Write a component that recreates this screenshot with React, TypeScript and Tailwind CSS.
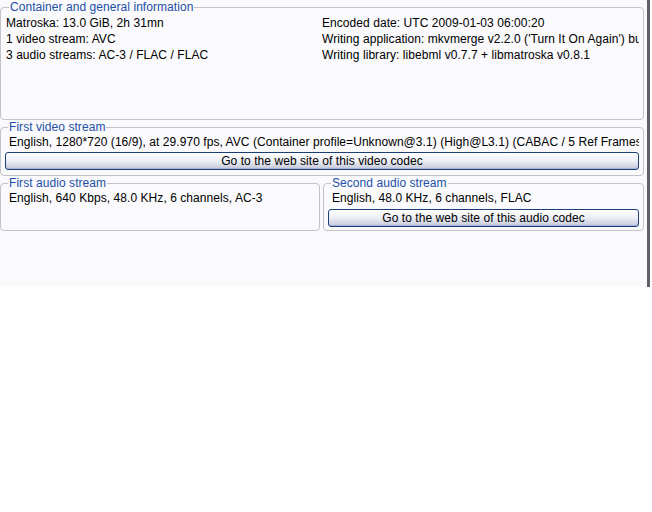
const font = { fontFamily: '"Liberation Sans", Arial, sans-serif' };

const GroupBox = ({
    title,
    className,
    children,
}: {
    title: string;
    className: string;
    children: React.ReactNode;
}) => (
    <fieldset
        className={`min-w-0 border border-[#c4c4c8] rounded-[4px] px-[4px] pb-[4px] ${className}`}
    >
        <legend className="ml-[3px] px-px text-[12px] leading-[14px] text-[#2350a6]">
            {title}
        </legend>
        {children}
    </fieldset>
);

const XpButton = ({ label }: { label: string }) => (
    <button className="block w-full h-[18px] rounded-[3px] border border-[#1d3f78] bg-gradient-to-b from-[#ffffff] via-[#eceef4] to-[#c3c7da] text-[12px] leading-[16px] tracking-[0.06px] text-black shadow-[inset_0_-1px_0_#a9b3d6]">
        {label}
    </button>
);

export default function App() {
    return (
        <div className="w-[650px] h-[287px] bg-[#fafafc] border-r-[3px] border-[#5f5f6c] text-[12px] leading-[16px] tracking-[0.06px] text-black" style={font}>
            <div className="w-[644px] flex flex-col">
                {/* Container and general information */}
                <GroupBox title="Container and general information" className="h-[120px] pl-[5px]">
                    <div className="grid grid-cols-[316px_1fr] pt-px whitespace-nowrap overflow-hidden">
                        <div className="flex flex-col">
                            <span>Matroska: 13.0 GiB, 2h 31mn</span>
                            <span>1 video stream: AVC</span>
                            <span>3 audio streams: AC-3 / FLAC / FLAC</span>
                        </div>
                        <div className="flex flex-col overflow-hidden">
                            <span>Encoded date: UTC 2009-01-03 06:00:20</span>
                            <span>Writing application: mkvmerge v2.2.0 ('Turn It On Again') built on Jul 27 2008</span>
                            <span>Writing library: libebml v0.7.7 + libmatroska v0.8.1</span>
                        </div>
                    </div>
                </GroupBox>

                {/* First video stream */}
                <GroupBox title="First video stream" className="h-[56px]">
                    <div className="pl-[4px] whitespace-nowrap overflow-hidden">
                        English, 1280*720 (16/9), at 29.970 fps, AVC (Container profile=Unknown@3.1) (High@L3.1) (CABAC / 5 Ref Frames)
                    </div>
                    <div className="mt-[2px]">
                        <XpButton label="Go to the web site of this video codec" />
                    </div>
                </GroupBox>

                {/* Audio streams */}
                <div className="flex gap-[3px]">
                    <GroupBox title="First audio stream" className="w-[320px] h-[55px]">
                        <div className="pl-[4px] whitespace-nowrap overflow-hidden">
                            English, 640 Kbps, 48.0 KHz, 6 channels, AC-3
                        </div>
                    </GroupBox>
                    <GroupBox title="Second audio stream" className="flex-1 h-[55px]">
                        <div className="pl-[4px] whitespace-nowrap overflow-hidden">
                            English, 48.0 KHz, 6 channels, FLAC
                        </div>
                        <div className="mt-[3px]">
                            <XpButton label="Go to the web site of this audio codec" />
                        </div>
                    </GroupBox>
                </div>
            </div>
        </div>
    );
}
